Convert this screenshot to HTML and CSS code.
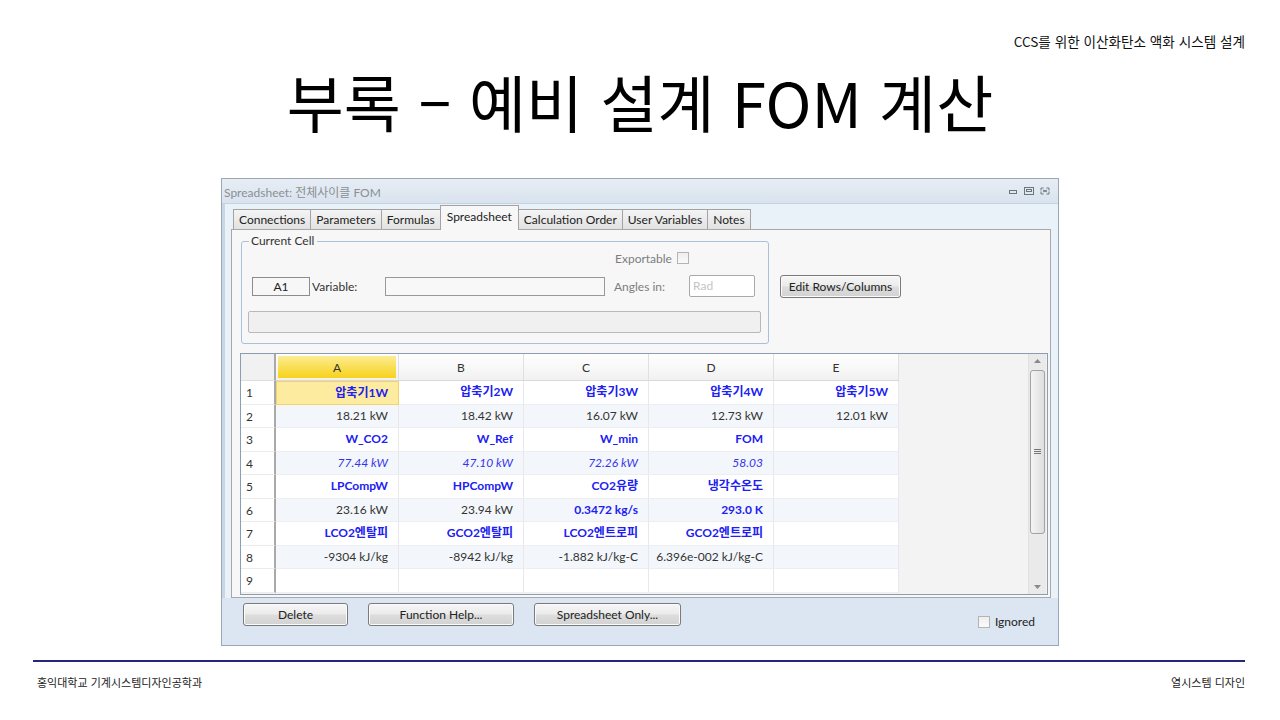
FILE: index.html
```html
<!DOCTYPE html>
<html lang="ko">
<head>
<meta charset="utf-8">
<title>부록 – 예비 설계 FOM 계산</title>
<link rel="stylesheet" href="styles.css">
</head>
<body>
<div class="slide">
  <div class="topnote">CCS를 위한 이산화탄소 액화 시스템 설계</div>
  <h1 class="title">부록 – 예비 설계 FOM 계산</h1>

  <div class="window">
    <div class="titlebar">
      <span class="wtitle">Spreadsheet: 전체사이클 FOM</span>
      <span class="wctrls">
        <svg width="10" height="8" viewBox="0 0 10 8"><rect x="1.5" y="3.5" width="7" height="3" fill="none" stroke="#6d7480"/></svg>
        <svg width="10" height="8" viewBox="0 0 10 8"><rect x="0.5" y="0.5" width="9" height="7" fill="none" stroke="#6d7480"/><rect x="2.5" y="2.5" width="5" height="2" fill="none" stroke="#6d7480"/></svg>
        <svg width="10" height="8" viewBox="0 0 10 8"><path d="M1 1h2.5M1 1v2.5M9 1H6.5M9 1v2.5M1 7h2.5M1 7V4.5M9 7H6.5M9 7V4.5M3 3l4 2M7 3L3 5" fill="none" stroke="#6d7480"/></svg>
      </span>
    </div>

    <div class="client">
      <div class="tabs">
        <div class="tab">Connections</div>
        <div class="tab">Parameters</div>
        <div class="tab">Formulas</div>
        <div class="tab active">Spreadsheet</div>
        <div class="tab">Calculation Order</div>
        <div class="tab">User Variables</div>
        <div class="tab">Notes</div>
      </div>

      <div class="panel">
        <div class="toprow">
          <fieldset class="cellgroup">
            <legend>Current Cell</legend>
            <div class="row-export">
              <span class="dim">Exportable</span>
              <span class="chk"></span>
            </div>
            <div class="row-var">
              <span class="cellref">A1</span>
              <span class="lbl-var">Variable:</span>
              <span class="input-var"></span>
              <span class="dim lbl-ang">Angles in:</span>
              <span class="input-rad">Rad</span>
            </div>
            <div class="formula-bar"></div>
          </fieldset>
          <button class="btn btn-edit">Edit Rows/Columns</button>
        </div>

        <div class="sheet">
          <div class="grid">
            <div class="corner"></div>
            <div class="ch sel"><span>A</span></div>
            <div class="ch"><span>B</span></div>
            <div class="ch"><span>C</span></div>
            <div class="ch"><span>D</span></div>
            <div class="ch"><span>E</span></div>
            <div class="filler"></div>

            <div class="rh">1</div>
            <div class="c v cur">압축기1W</div>
            <div class="c v">압축기2W</div>
            <div class="c v">압축기3W</div>
            <div class="c v">압축기4W</div>
            <div class="c v">압축기5W</div>

            <div class="rh">2</div>
            <div class="c e">18.21 kW</div>
            <div class="c e">18.42 kW</div>
            <div class="c e">16.07 kW</div>
            <div class="c e">12.73 kW</div>
            <div class="c e">12.01 kW</div>

            <div class="rh">3</div>
            <div class="c v">W_CO2</div>
            <div class="c v">W_Ref</div>
            <div class="c v">W_min</div>
            <div class="c v">FOM</div>
            <div class="c"></div>

            <div class="rh">4</div>
            <div class="c e it">77.44 kW</div>
            <div class="c e it">47.10 kW</div>
            <div class="c e it">72.26 kW</div>
            <div class="c e it">58.03</div>
            <div class="c e"></div>

            <div class="rh">5</div>
            <div class="c v">LPCompW</div>
            <div class="c v">HPCompW</div>
            <div class="c v">CO2유량</div>
            <div class="c v">냉각수온도</div>
            <div class="c"></div>

            <div class="rh">6</div>
            <div class="c e">23.16 kW</div>
            <div class="c e">23.94 kW</div>
            <div class="c e v">0.3472 kg/s</div>
            <div class="c e v">293.0 K</div>
            <div class="c e"></div>

            <div class="rh">7</div>
            <div class="c v">LCO2엔탈피</div>
            <div class="c v">GCO2엔탈피</div>
            <div class="c v">LCO2엔트로피</div>
            <div class="c v">GCO2엔트로피</div>
            <div class="c"></div>

            <div class="rh">8</div>
            <div class="c e">-9304 kJ/kg</div>
            <div class="c e">-8942 kJ/kg</div>
            <div class="c e">-1.882 kJ/kg-C</div>
            <div class="c e">6.396e-002 kJ/kg-C</div>
            <div class="c e"></div>

            <div class="rh">9</div>
            <div class="c"></div>
            <div class="c"></div>
            <div class="c"></div>
            <div class="c"></div>
            <div class="c"></div>
          </div>
          <div class="vscroll">
            <svg class="arr" width="7" height="4" viewBox="0 0 7 4"><path d="M0 4L3.5 0L7 4z" fill="#8a8a8a"/></svg>
            <div class="track">
              <div class="thumb">
                <svg width="7" height="6" viewBox="0 0 7 6"><path d="M0 0.5h7M0 2.5h7M0 4.5h7" stroke="#777" stroke-width="1"/></svg>
              </div>
            </div>
            <svg class="arr" width="7" height="4" viewBox="0 0 7 4"><path d="M0 0L3.5 4L7 0z" fill="#8a8a8a"/></svg>
          </div>
        </div>
      </div>

      <div class="actions">
        <button class="btn b-del">Delete</button>
        <button class="btn b-help">Function Help...</button>
        <button class="btn b-only">Spreadsheet Only...</button>
        <label class="ignored"><span class="chk"></span>Ignored</label>
      </div>
    </div>
  </div>

  <div class="rule"></div>
  <div class="footer">
    <span>홍익대학교 기계시스템디자인공학과</span>
    <span>열시스템 디자인</span>
  </div>
</div>
</body>
</html>
```

FILE: styles.css
```css
* { box-sizing: border-box; }
html, body { margin: 0; padding: 0; background: #fff; }
body { font-family: "Noto Sans CJK KR", "Noto Sans", sans-serif; color: #000; }

.slide {
  width: 1280px;
  height: 720px;
  display: flex;
  flex-direction: column;
  padding-top: 33px;
}

.topnote {
  align-self: flex-end;
  margin-right: 35px;
  font-size: 13.6px;
  line-height: 16px;
  color: #111;
}

.title {
  margin: 17px 0 0;
  font-weight: 400;
  font-size: 62px;
  line-height: 70px;
  height: 70px;
  text-align: center;
  color: #000;
}

/* ---------- window ---------- */
.window {
  margin: 42px 0 0 221px;
  width: 838px;
  height: 468px;
  border: 1px solid #9ba7b5;
  background: #dbe6f2;
  display: flex;
  flex-direction: column;
  font-family: "Lato", "Noto Sans CJK KR", sans-serif;
  font-size: 12px;
  color: #222;
}

.titlebar {
  height: 25px;
  display: flex;
  align-items: center;
  justify-content: space-between;
  padding: 0 8px 0 2px;
  background: linear-gradient(#e7edf4, #d9e3ee);
  border-bottom: 1px solid #c6d2df;
}
.wtitle { color: #8b8f96; font-size: 12px; }
.wctrls { display: flex; gap: 6px; align-items: center; }
.wctrls svg { display: block; }

.client {
  flex: 1;
  display: flex;
  flex-direction: column;
  padding: 2px 7px 0 9px;
  background: linear-gradient(90deg, #c9d6e4 0, #c9d6e4 3px, #e9f1f9 3px);
}

.tabs {
  display: flex;
  align-items: flex-end;
  height: 23px;
  padding-left: 2px;
  position: relative;
  z-index: 1;
}
.tab {
  height: 20px;
  line-height: 19px;
  padding: 0 5px;
  border: 1px solid #a3a3a3;
  border-bottom: none;
  margin-right: -1px;
  background: linear-gradient(#f4f4f4, #e2e2e2);
  color: #222;
  white-space: nowrap;
}
.tab.active {
  height: 25px;
  line-height: 21px;
  padding: 0 6px;
  background: #f7f7f7;
  position: relative;
  margin-bottom: -1px;
}

.panel {
  height: 369px;
  border: 1px solid #a8a8a8;
  background: #f7f7f7;
  padding: 3px 2px 0 8px;
  display: flex;
  flex-direction: column;
}

.toprow { display: flex; align-items: flex-start; }

.cellgroup {
  margin: 0 0 0 1px;
  padding: 0 8px 9px 6px;
  width: 528px;
  height: 111px;
  border: 1px solid #a9c0d8;
  border-radius: 3px;
  min-width: 0;
}
.cellgroup legend {
  padding: 0 3px 0 2px;
  margin-left: 1px;
  line-height: 16px;
  color: #333;
}

.row-export {
  display: flex;
  align-items: center;
  height: 18px;
  padding-left: 367px;
  gap: 5px;
}
.dim { color: #7d7d7d; }
.chk {
  display: inline-block;
  width: 12px;
  height: 12px;
  border: 1px solid #b4b4b4;
  background: linear-gradient(#eeeeee, #fafafa);
}

.row-var {
  display: flex;
  align-items: center;
  height: 22px;
  margin-top: 8px;
}
.cellref {
  width: 58px;
  height: 19px;
  margin-left: 4px;
  border: 1px solid #8c8c8c;
  background: #f7f7f7;
  text-align: center;
  line-height: 17px;
}
.lbl-var { width: 75px; padding-left: 2px; color: #333; }
.input-var {
  width: 220px;
  height: 19px;
  border: 1px solid #999;
  background: #f8f8f8;
}
.lbl-ang { width: 75px; margin-left: 9px; }
.input-rad {
  width: 66px;
  height: 22px;
  border: 1px solid #a9a9a9;
  border-radius: 2px;
  background: #fff;
  color: #c4c4c4;
  padding-left: 3px;
  line-height: 20px;
}

.formula-bar {
  margin-top: 14px;
  width: 513px;
  height: 22px;
  border: 1px solid #b9b9b9;
  border-radius: 2px;
  background: #f0f0f0;
}

.btn {
  font-family: "Lato", "Noto Sans CJK KR", sans-serif;
  font-size: 12px;
  color: #222;
  height: 23px;
  padding: 0;
  border: 1px solid #7a7a7a;
  border-radius: 3px;
  background: linear-gradient(#f6f6f6 0%, #ebebeb 48%, #dddddd 52%, #d2d2d2 100%);
  box-shadow: inset 0 0 0 1px #fbfbfb;
}
.btn-edit { width: 121px; margin: 42px 0 0 11px; }

/* ---------- spreadsheet ---------- */
.sheet {
  margin-top: 9px;
  display: flex;
  height: 242px;
  border: 1px solid #8b9db2;
  background: #f3f3f3;
}
.grid {
  flex: 1;
  display: grid;
  grid-template-columns: 35px 123px 125px 125px 125px 125px 1fr;
  grid-template-rows: 27px repeat(9, 23.5px);
  align-content: start;
}
.corner {
  background: #f1f1f1;
  border-right: 2px solid #a9a9a9;
  border-bottom: 1px solid #dedede;
}
.ch {
  background: linear-gradient(#ffffff, #f1f1f1);
  border-right: 1px solid #e0e0e0;
  border-bottom: 1px solid #d9d9d9;
  display: flex;
  padding: 2px;
}
.ch span {
  flex: 1;
  display: flex;
  align-items: center;
  justify-content: center;
  color: #333;
}
.ch.sel span {
  background: linear-gradient(#fcec93, #f7d21a);
}
.filler {
  grid-row: 1 / span 10;
  grid-column: 7;
  background: #f3f3f3;
}
.rh {
  grid-column: 1;
  background: #fff;
  border-right: 2px solid #a9a9a9;
  border-bottom: 1px solid #ececec;
  padding-left: 5px;
  line-height: 23px;
  color: #333;
}
.c {
  background: #fff;
  border-right: 1px solid #e6e8eb;
  border-bottom: 1px solid #eceef1;
  text-align: right;
  padding-right: 10px;
  line-height: 22px;
  white-space: nowrap;
  color: #333;
}
.c.e { background: #f3f7fb; }
.c.v { color: #2020f2; font-weight: 700; }
.c.it { color: #3333ee; font-style: italic; }
.c.cur { background: #fdeb9f; border: 1px solid #f0d36a; }

.vscroll {
  width: 18px;
  margin-right: 1px;
  display: flex;
  flex-direction: column;
  align-items: center;
  background: #eaeaea;
  border-left: 1px solid #e0e0e0;
}
.arr { margin: 5px 0; flex: none; }
.track { flex: 1; width: 100%; padding: 2px 1px 0; }
.thumb {
  height: 164px;
  border: 1px solid #a3a3a3;
  border-radius: 3px;
  background: linear-gradient(90deg, #f4f4f4, #dedede);
  display: flex;
  align-items: center;
  justify-content: center;
}
.thumb svg { display: block; }

/* ---------- bottom actions ---------- */
.actions {
  display: flex;
  align-items: flex-start;
  padding: 5px 0 0 21px;
  background: #dbe6f2;
  margin: 0 -7px 0 -9px;
  flex: 1;
}
.b-del { width: 105px; }
.b-help { width: 146px; margin-left: 20px; }
.b-only { width: 147px; margin-left: 20px; }
.ignored {
  margin-left: auto;
  margin-right: 23px;
  margin-top: 11px;
  display: flex;
  align-items: center;
  gap: 5px;
  color: #222;
}

/* ---------- footer ---------- */
.rule {
  margin: 14px 0 0 33px;
  width: 1212px;
  height: 2px;
  background: #26267e;
}
.footer {
  margin: 12px 35px 0 37px;
  display: flex;
  justify-content: space-between;
  font-size: 11px;
  line-height: 16px;
  color: #222;
}
```
